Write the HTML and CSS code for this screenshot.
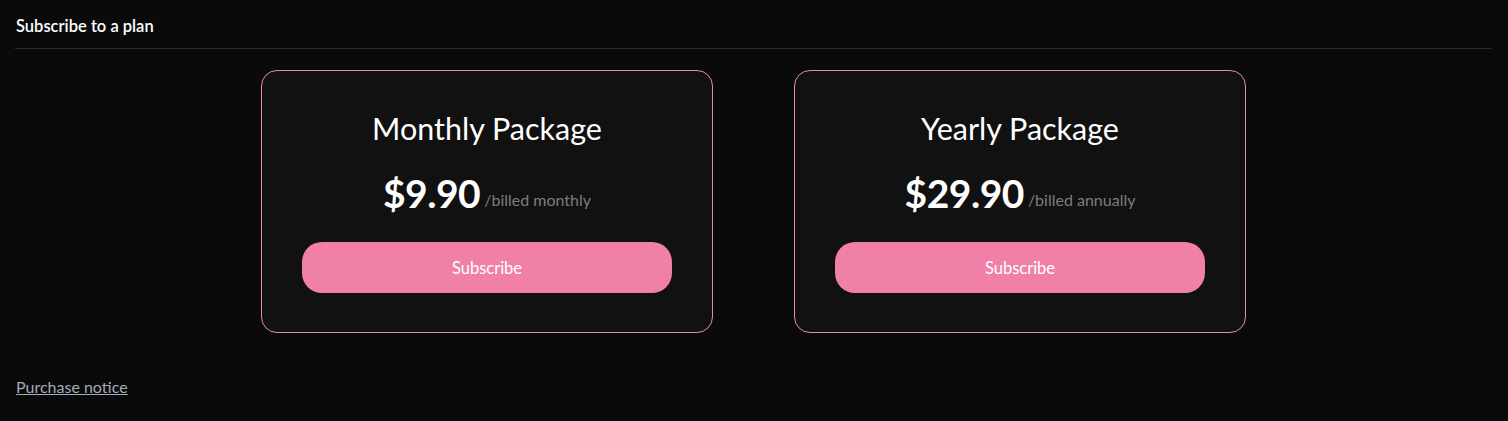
FILE: index.html
```html
<!DOCTYPE html>
<html lang="en">
<head>
<meta charset="utf-8">
<title>Subscribe to a plan</title>
<link rel="stylesheet" href="styles.css">
</head>
<body>
<div class="page">
  <div class="header">Subscribe to a plan</div>
  <div class="plans">
    <div class="card">
      <div class="title">Monthly Package</div>
      <div class="price"><span class="amount">$9.90</span><span class="period">/billed monthly</span></div>
      <button class="btn">Subscribe</button>
    </div>
    <div class="card">
      <div class="title">Yearly Package</div>
      <div class="price"><span class="amount">$29.90</span><span class="period">/billed annually</span></div>
      <button class="btn">Subscribe</button>
    </div>
  </div>
  <a class="notice" href="#">Purchase notice</a>
</div>
</body>
</html>
```
FILE: styles.css
```css
html, body {
  margin: 0;
  padding: 0;
  background: #0a0a0a;
  height: 100%;
}
body {
  font-family: "Lato", "Noto Sans", sans-serif;
  color: #fff;
}
.page {
  padding: 0 16px 0 15px;
}
.header {
  font-size: 16.5px;
  font-weight: 600;
  height: 49px;
  line-height: 53px;
  padding-left: 1px;
  border-bottom: 1px solid #2b2b2b;
  box-sizing: border-box;
}
.plans {
  display: flex;
  justify-content: center;
  gap: 81px;
  margin-top: 21px;
}
.card {
  width: 452px;
  height: 263px;
  box-sizing: border-box;
  background: #111111;
  border: 1px solid #e98aab;
  border-radius: 16px;
  padding: 0 40px;
  display: flex;
  flex-direction: column;
  align-items: center;
}
.title {
  font-size: 30.5px;
  margin-top: 39px;
  line-height: 36px;
}
.price {
  margin-top: 25px;
  display: flex;
  align-items: baseline;
  line-height: 44px;
}
.amount {
  font-size: 39px;
  font-weight: 700;
  letter-spacing: -0.5px;
}
.period {
  font-size: 16px;
  color: #7d7d7d;
  margin-left: 4px;
  position: relative;
  top: -2px;
}
.btn {
  margin-top: 18px;
  width: 100%;
  height: 51px;
  border: none;
  border-radius: 20px;
  background: #f080a8;
  color: #fff;
  font-family: inherit;
  font-size: 16.5px;
}
.notice {
  display: inline-block;
  margin-top: 44px;
  padding-left: 1px;
  font-size: 16px;
  color: #a3acb8;
  text-decoration: underline;
}
```
